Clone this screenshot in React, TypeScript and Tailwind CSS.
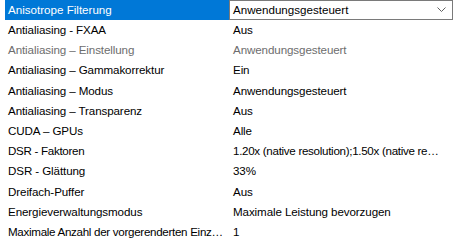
const rows: { label: string; value: string; disabled?: boolean; tight?: boolean }[] = [
  { label: 'Antialiasing - FXAA', value: 'Aus' },
  { label: 'Antialiasing – Einstellung', value: 'Anwendungsgesteuert', disabled: true },
  { label: 'Antialiasing – Gammakorrektur', value: 'Ein' },
  { label: 'Antialiasing – Modus', value: 'Anwendungsgesteuert' },
  { label: 'Antialiasing – Transparenz', value: 'Aus' },
  { label: 'CUDA – GPUs', value: 'Alle' },
  { label: 'DSR - Faktoren', value: '1.20x (native resolution);1.50x (native re…', tight: true },
  { label: 'DSR - Glättung', value: '33%' },
  { label: 'Dreifach-Puffer', value: 'Aus' },
  { label: 'Energieverwaltungsmodus', value: 'Maximale Leistung bevorzugen' },
  { label: 'Maximale Anzahl der vorgerenderten Einz…', value: '1', tight: true },
];

export default function App() {
  return (
    <div
      className="w-[455px] h-[243px] bg-white overflow-hidden text-[11.6px] text-black pl-[5px]"
      style={{ fontFamily: '"Liberation Sans", Arial, sans-serif' }}
    >
      <div className="flex h-[20px]">
        <div className="w-[224px] shrink-0 bg-[#0078d7] text-white pl-[3px] leading-[20px] whitespace-nowrap">
          Anisotrope Filterung
        </div>
        <div className="w-[224px] h-[20px] shrink-0 border border-[#7a7a7a] bg-white flex items-center justify-between pl-[3px] pr-[6px]">
          <span>Anwendungsgesteuert</span>
          <svg width="9" height="6" viewBox="0 0 9 6">
            <path d="M0.5 0.5 L4.5 4.5 L8.5 0.5" fill="none" stroke="#606060" strokeWidth="1" />
          </svg>
        </div>
      </div>
      {rows.map((r) => (
        <div
          key={r.label}
          className={`flex h-[20.2px] leading-[20px] ${r.disabled ? 'text-[#6d6d6d]' : ''} ${
            r.tight ? 'tracking-[-0.3px]' : 'tracking-[-0.1px]'
          }`}
        >
          <div className="w-[224px] shrink-0 pl-[3px] whitespace-nowrap">{r.label}</div>
          <div className="pl-[4px] whitespace-nowrap">{r.value}</div>
        </div>
      ))}
    </div>
  );
}
